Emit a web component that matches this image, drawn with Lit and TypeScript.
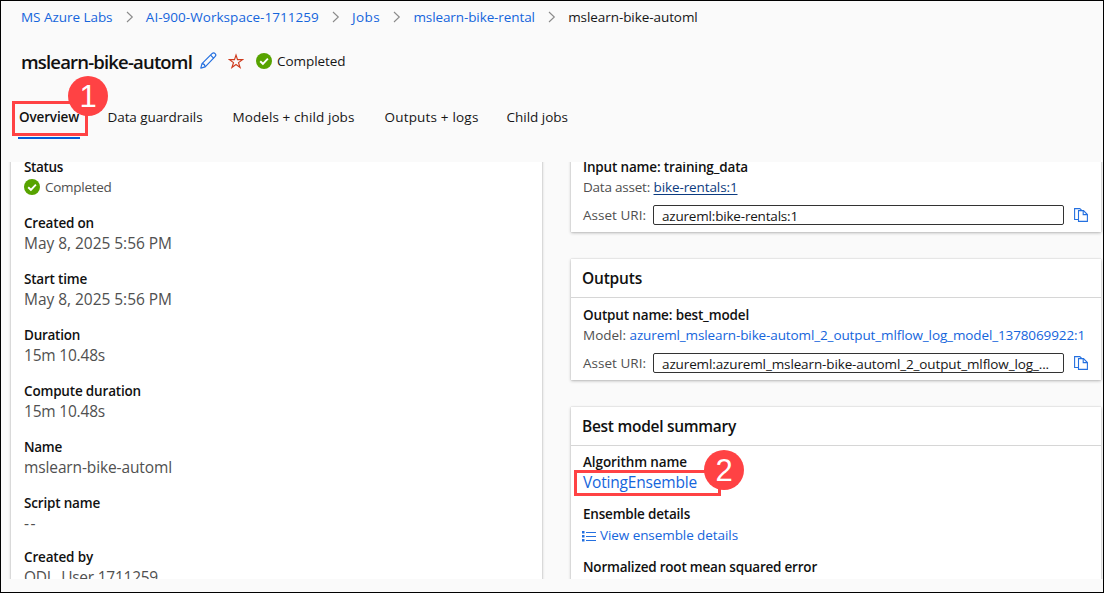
import { LitElement, html, css, svg } from "lit";
import { customElement, property } from "lit/decorators.js";

/** Single line of text whose tracking is adjusted so that it fills a given width. */
@customElement("fit-text")
class FitText extends LitElement {
  static styles = css`
    :host { display: inline-block; white-space: nowrap; text-align: left; }
    .run { display: inline-block; text-decoration: inherit; }
  `;
  @property() text = "";
  @property({ type: Number }) w = 0;
  render() {
    return html`<span class="run">${this.text}</span>`;
  }
  updated() {
    const run = this.renderRoot.querySelector(".run") as HTMLElement;
    run.style.letterSpacing = "0px";
    const natural = run.getBoundingClientRect().width;
    run.style.letterSpacing = `${(this.w - natural) / this.text.length}px`;
    this.style.width = `${this.w}px`;
  }
}

const t = (text: string, w: number, cls = "") =>
  html`<fit-text class=${cls} .text=${text} .w=${w}></fit-text>`;

const chevron = html`<svg class="chev" width="8" height="12" viewBox="0 0 8 12">
  <path d="M1 1l5.3 5L1 11" fill="none" stroke="#8a8a8a" stroke-width="1.1" /></svg>`;

const check = html`<svg class="check" width="16" height="16" viewBox="0 0 16 16">
  <circle cx="8" cy="8" r="8" fill="#57a300" />
  <path d="M4.2 8.2l2.7 2.6 5-5.2" fill="none" stroke="#fff" stroke-width="1.9" /></svg>`;

const pencil = html`<svg class="pencil" width="17" height="17" viewBox="0 0 17 17">
  <g fill="none" stroke="#2470e0" stroke-width="1.2" stroke-linejoin="round">
    <path d="M.8 16.200l1.200-4.500L12 1.700c.9-.9 2.200-1 3.100-.1s.8 2.200-.1 3.100L5.200 14.900z" />
    <path d="M10.600 3.100l3.200 3.200M2 11.700c1.700.1 3 1.500 3.200 3.200" />
  </g></svg>`;

const star = html`<svg class="star" width="16" height="16" viewBox="0 0 16 16">
  <path d="M8 2l1.500 4.600h5l-4 3 1.600 4.900L8 11.500l-4.100 3 1.600-4.900-4-3h5z"
    fill="none" stroke="#cf3a1c" stroke-width="1.150" /></svg>`;

const copy = html`<svg class="copy" width="14" height="14" viewBox="0 0 14 14">
  <g fill="none" stroke="#2470e0" stroke-width="1.100">
    <path d="M4.200 11.500H.6V.6h5.200l2.200 2" />
    <path d="M4.500 2.600h5l3.900 3.900v6.900H4.500z" />
    <path d="M9.200 2.700v3.900h4" />
  </g></svg>`;

const list = html`<svg class="list" width="14" height="11" viewBox="0 0 14 11">
  ${[0, 4, 8].map(
    (y) => svg`<rect x="0" y=${y} width="2.500" height="2.500" fill="#2470e0" />
      <rect x="4" y=${y + 1} width="10" height="1" fill="#2470e0" />`
  )}</svg>`;

@customElement("app-root")
class AppRoot extends LitElement {
  static styles = css`
    :host {
      display: block; box-sizing: border-box; width: 1104px; height: 593px;
      border: 1px solid #000; background: #fafafa; color: #161616; overflow: hidden;
      font: 13.500px/20px "Open Sans", "Noto Sans", sans-serif;
    }
    svg { display: block; flex: none; }
    .crumbs { display: flex; align-items: center; padding: 6px 0 0 20px; height: 20px; }
    .chev { margin: 0 12.300px 0 13px; }
    .link { color: #1565dc; }
    .head { display: flex; align-items: center; height: 24px; margin-top: 23px; padding-left: 20px; }
    .title { font-size: 18.500px; font-weight: 600; line-height: 24px; color: #111; }
    .pencil { margin: -4px 0 0 8px; }
    .star { margin: -2px 0 0 11px; }
    .head .check { margin: -2px 5px 0 12px; }
    .state { margin-top: -2px; }
    .tabs { display: flex; height: 33px; margin-top: 33px; padding-left: 17px; }
    .tab { margin-right: 30px; }
    .tab.on { position: relative; width: 60px; padding: 0 1px; margin-right: 27.500px; height: 30px; border-bottom: 2px solid #015cda; }
    .tab.near { margin-right: 28px; }
    .b { font-weight: 600; color: #111; }
    .ring { position: absolute; box-sizing: border-box; border: 3px solid #ff4244; }
    .ring.one { left: -6px; top: -6px; width: 76px; height: 35px; }
    .ring.two { left: -9px; top: -2px; width: 147px; height: 26px; }
    .badge {
      position: absolute; width: 40px; height: 40px; border-radius: 50%; background: #ff4244;
      color: #fff; text-align: center; font: 31px/41px "Liberation Sans", sans-serif;
    }
    .badge.one { left: 50px; top: -31px; }
    .badge.two { left: 121px; top: -22px; }
    .body { display: flex; gap: 29px; height: 417px; overflow: hidden; margin-top: 22px; padding-left: 10px; }
    .card { background: #fff; box-shadow: 0 1px 3px rgba(0, 0, 0, .26), 0 0 1px rgba(0, 0, 0, .22); }
    .left { width: 518px; height: 440px; padding: 0 0 0 13px; margin-top: -5px; }
    .item { height: 56px; }
    .item.short { height: 54px; }
    .line { display: flex; height: 20px; white-space: pre; }
    .first .line { align-items: center; }
    .first .check { margin-right: 5px; }
    .muted { color: #505050; }
    .big { font-size: 15.500px; }
    .right { width: 530px; }
    .right .card { box-sizing: border-box; }
    .c1 { height: 75px; margin-top: -5px; padding: 0 0 0 12px; }
    .c2 { height: 121px; margin-top: 27px; }
    .c3 { height: 200px; margin-top: 27px; }
    .h {
      box-sizing: border-box; height: 39px; border-bottom: 1px solid #d6d6d6; padding: 9px 0 0 11px;
      font-size: 15.500px; font-weight: 600; color: #111;
    }
    .c2 .in { padding: 7px 0 0 12px; }
    .c3 .in { padding: 6px 0 0 12px; }
    .under { color: #0c3b80; text-decoration: underline; text-underline-offset: 2px; }
    .uri { display: flex; align-items: center; height: 20px; margin-top: 8px; }
    .box {
      box-sizing: border-box; width: 411px; height: 20px; margin: 0 10px 0 7px; padding-left: 8px;
      border: 1px solid #333; border-radius: 2px; line-height: 20px;
    }
    .call { position: relative; height: 20px; }
    .list { margin: 2px 4px 0 -1px; }
    .view { align-items: center; margin-top: 1px; }
    .gap { margin-top: 12px; }
  `;

  private items: [string, number, string, number][] = [
    ["Created on", 70, "May 8, 2025 5:56 PM", 148],
    ["Start time", 63, "May 8, 2025 5:56 PM", 148],
    ["Duration", 56, "15m 10.48s", 81],
    ["Compute duration", 117, "15m 10.48s", 81],
    ["Name", 38, "mslearn-bike-automl", 148],
    ["Script name", 76, "--", 13],
    ["Created by", 69, "ODL_User 1711259", 134],
  ];

  render() {
    return html`
      <nav class="crumbs">
        ${t("MS Azure Labs", 91.5, "link")}${chevron}${t("AI-900-Workspace-1711259", 173, "link")}${chevron}
        ${t("Jobs", 28, "link")}${chevron}${t("mslearn-bike-rental", 121.5, "link")}${chevron}
        ${t("mslearn-bike-automl", 129.5)}
      </nav>
      <header class="head">
        ${t("mslearn-bike-automl", 171, "title")}${pencil}${star}${check}${t("Completed", 68.5, "state")}
      </header>
      <div class="tabs">
        <div class="tab on">
          ${t("Overview", 60, "b")}
          <div class="ring one"></div>
          <div class="badge one">1</div>
        </div>
        <div class="tab">${t("Data guardrails", 95)}</div>
        <div class="tab">${t("Models + child jobs", 122)}</div>
        <div class="tab near">${t("Outputs + logs", 94)}</div>
        <div class="tab">${t("Child jobs", 61.5)}</div>
      </div>
      <main class="body">
        <section class="card left">
          <div class="item first">
            <div class="line">${t("Status", 39, "b")}</div>
            <div class="line">${check}${t("Completed", 66.5, "muted")}</div>
          </div>
          ${this.items.map(
            ([k, kw, v, vw]) => html`<div class="item ${v === "--" ? "short" : ""}">
              <div class="line">${t(k, kw, "b")}</div>
              <div class="line">${t(v, vw, "muted big")}</div>
            </div>`
          )}
        </section>
        <div class="right">
          <section class="card c1">
            <div class="line">${t("Input name: training_data", 165, "b")}</div>
            <div class="line">${t("Data asset:", 67, "muted")}<span> </span>${t("bike-rentals:1", 84, "under")}</div>
            <div class="uri">
              ${t("Asset URI:", 63, "muted")}
              <div class="box">${t("azureml:bike-rentals:1", 136)}</div>
              ${copy}
            </div>
          </section>
          <section class="card c2">
            <div class="h">${t("Outputs", 60)}</div>
            <div class="in">
              <div class="line">${t("Output name: best_model", 166, "b")}</div>
              <div class="line">${t("Model:", 43, "muted")}<span> </span>${t("azureml_mslearn-bike-automl_2_output_mlflow_log_model_1378069922:1", 455.5, "link")}</div>
              <div class="uri">
                ${t("Asset URI:", 63, "muted")}
                <div class="box">${t("azureml:azureml_mslearn-bike-automl_2_output_mlflow_log_...", 387)}</div>
                ${copy}
              </div>
            </div>
          </section>
          <section class="card c3">
            <div class="h">${t("Best model summary", 154)}</div>
            <div class="in">
              <div class="line">${t("Algorithm name", 104, "b")}</div>
              <div class="call">
                ${t("VotingEnsemble", 114, "link big")}
                <div class="ring two"></div>
                <div class="badge two">2</div>
              </div>
              <div class="line gap">${t("Ensemble details", 107, "b")}</div>
              <div class="line view">${list}${t("View ensemble details", 138, "link")}</div>
              <div class="line gap">${t("Normalized root mean squared error", 234, "b")}</div>
            </div>
          </section>
        </div>
      </main>
    `;
  }
}
